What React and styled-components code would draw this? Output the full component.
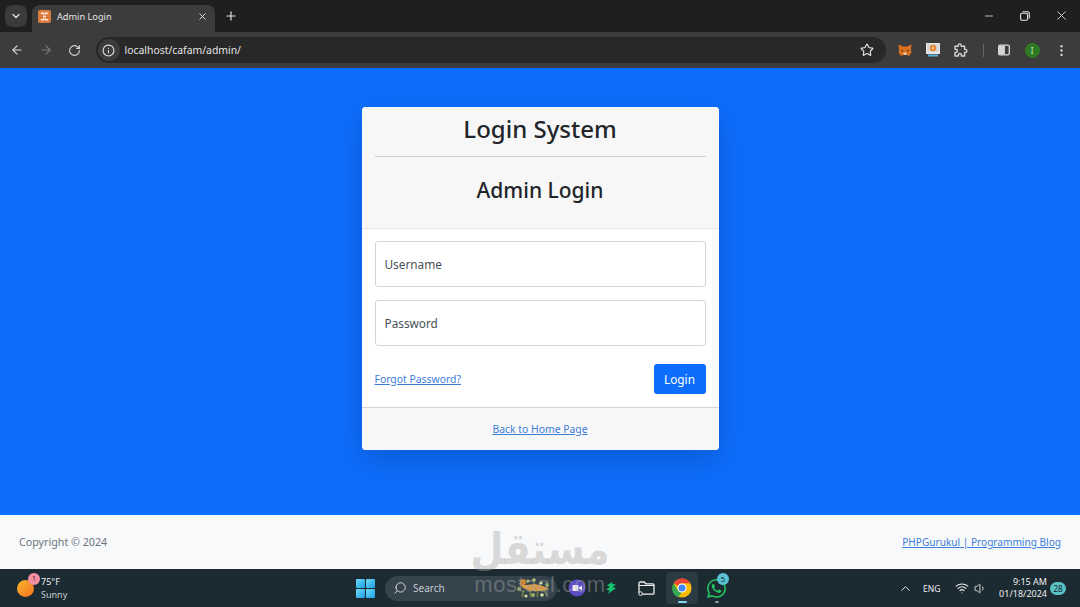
import React from "react";
import styled, { createGlobalStyle } from "styled-components";
import {
  ArrowLeft,
  ArrowRight,
  RotateCw,
  Info,
  Star,
  ChevronDown,
  ChevronUp,
  X,
  Plus,
  Minus,
  EllipsisVertical,
  Search,
  Wifi,
  Volume1,
} from "lucide-react";
import { BsWhatsapp } from "react-icons/bs";

const GlobalStyle = createGlobalStyle`
  html, body {
    margin: 0;
    padding: 0;
    height: 100%;
    overflow: hidden;
  }
  * {
    box-sizing: border-box;
  }
  body {
    font-family: "Noto Sans", "Open Sans", "Liberation Sans", sans-serif;
  }
`;

function XamppIcon() {
  return (
    <svg width="13" height="13" viewBox="0 0 13 13">
      <rect width="13" height="13" rx="2" fill="#d97b3c" />
      <path
        d="M2.8 3.2h2.8v1.6M10.2 3.2H7.4v1.6M2.8 9.8h2.8V8.2M10.2 9.8H7.4V8.2M5 6.5h3"
        stroke="#fbe6d2"
        strokeWidth="1.4"
        fill="none"
      />
    </svg>
  );
}

function FoxIcon() {
  return (
    <svg width="14" height="13" viewBox="0 0 14 13">
      <path d="M0.5 0.5 5 2.5h4L13.5 0.5 13 6l.5 2.5L11 12 8.5 11h-3L3 12 .5 8.5 1 6z" fill="#d9701f" />
      <path d="M5 6.5 3 5.5 4.5 8zM9 6.5l2-1L9.5 8z" fill="#40281a" />
      <path d="M5.5 8.5h3L8.5 11h-3z" fill="#e8c8a8" />
    </svg>
  );
}

function MonitorExtension() {
  return (
    <svg width="14" height="14" viewBox="0 0 14 14">
      <rect width="14" height="11" fill="#e6e6e6" />
      <rect x="1" y="1" width="12" height="8" fill="#d8d8d8" />
      <circle cx="7" cy="5" r="3.2" fill="#e8832f" />
      <circle cx="7" cy="5" r="1.2" fill="#f6d6b0" />
      <rect x="2" y="11.5" width="10" height="2" fill="#5fb0d8" />
    </svg>
  );
}

function PuzzleIcon() {
  return (
    <svg width="14" height="14" viewBox="0 0 14 14">
      <path
        d="M1 3.2h3.2V2.4a1.5 1.5 0 0 1 3 0v.8h3.4v3.2h.8a1.5 1.5 0 0 1 0 3h-.8V13H7.4v-1a1.5 1.5 0 0 0-3 0v1H1V9.4h.8a1.6 1.6 0 0 0 0-3.2H1z"
        fill="none"
        stroke="#d4d4d4"
        strokeWidth="1.4"
        strokeLinejoin="round"
      />
    </svg>
  );
}

function SidePanelIcon() {
  return (
    <svg width="12" height="12" viewBox="0 0 13 12">
      <rect x=".75" y=".75" width="11.5" height="10.5" rx="1.5" fill="#d4d4d4" stroke="#d4d4d4" strokeWidth="1.5" />
      <rect x="7.5" y="1.5" width="4" height="9" fill="#3c3c3c" />
    </svg>
  );
}

function RestoreIcon() {
  return (
    <svg width="10" height="10" viewBox="0 0 10 10">
      <rect x=".6" y="2.2" width="7" height="7" rx="1.4" fill="none" stroke="#e6e6e6" strokeWidth="1.1" />
      <path d="M2.6 .7h5a1.7 1.7 0 0 1 1.7 1.7v5" fill="none" stroke="#e6e6e6" strokeWidth="1.1" />
    </svg>
  );
}

function WindowsLogo() {
  return (
    <svg width="19" height="19" viewBox="0 0 19 19">
      <defs>
        <linearGradient id="winBlue" x1="0" y1="0" x2="1" y2="1">
          <stop offset="0" stopColor="#6fdcf7" />
          <stop offset="1" stopColor="#1a9ee6" />
        </linearGradient>
      </defs>
      <rect x="0" y="0" width="9" height="9" rx="1" fill="url(#winBlue)" />
      <rect x="10" y="0" width="9" height="9" rx="1" fill="url(#winBlue)" />
      <rect x="0" y="10" width="9" height="9" rx="1" fill="url(#winBlue)" />
      <rect x="10" y="10" width="9" height="9" rx="1" fill="url(#winBlue)" />
    </svg>
  );
}

function MeetIcon() {
  return (
    <svg width="18" height="18" viewBox="0 0 18 18">
      <circle cx="9" cy="9" r="8.5" fill="#5b4bc4" />
      <rect x="4.5" y="6" width="6" height="6" rx="1" fill="#f3eefc" />
      <path d="M11 8.5 14 6.5v5L11 9.5z" fill="#f3eefc" />
    </svg>
  );
}

function BoltIcon() {
  return (
    <svg width="11" height="12" viewBox="0 0 11 12">
      <path d="M6 0 1 3.5 4 5 0 7.5l3.5 1L2 12l8-6-3.5-1L10 2.5 6.5 2z" fill="#12c46b" />
    </svg>
  );
}

function FolderCloud() {
  return (
    <svg width="17" height="15" viewBox="0 0 17 15">
      <path
        d="M1 12V2.2C1 1.5 1.5 1 2.2 1h4l1.6 1.8h7c.7 0 1.2.5 1.2 1.2v8c0 .7-.5 1.2-1.2 1.2H4"
        fill="none"
        stroke="#f0f0f0"
        strokeWidth="1.3"
      />
      <path d="M1 4.5h15" stroke="#f0f0f0" strokeWidth="1" />
      <circle cx="2.6" cy="12.6" r="1.8" fill="#1c2a32" stroke="#f0f0f0" strokeWidth="1" />
    </svg>
  );
}

function ChromeLogo() {
  return (
    <svg width="20" height="20" viewBox="0 0 48 48">
      <circle cx="24" cy="24" r="23" fill="#fbbc04" />
      <path d="M24 1a23 23 0 0 1 19.9 11.5H24a11.5 11.5 0 0 0-10 5.8L4.1 12.5A23 23 0 0 1 24 1z" fill="#ea4335" />
      <path d="M4.1 12.5 14 29.8A11.5 11.5 0 0 0 24 35.5L14 46A23 23 0 0 1 4.1 12.5z" fill="#34a853" />
      <circle cx="24" cy="24" r="11" fill="#fff" />
      <circle cx="24" cy="24" r="8.5" fill="#4285f4" />
    </svg>
  );
}

function Doodle() {
  return (
    <svg width="36" height="22" viewBox="0 0 36 22">
      <path d="M3 6 10 8l9-1 8 2 6 3-7 2-12 0-7-3z" fill="#d99a45" />
      <circle cx="7" cy="5" r="3" fill="#c98736" />
      <path d="M8 13l-2 7M14 14l1 6M22 14l-1 6M28 13l3 6" stroke="#6f7f45" strokeWidth="1.6" />
      <circle cx="3" cy="12" r="2" fill="#8fa35a" />
      <circle cx="12" cy="4" r="1.6" fill="#b8c26a" />
      <circle cx="18" cy="3" r="1.8" fill="#b8c26a" />
      <circle cx="25" cy="6" r="1.6" fill="#d8dca0" />
      <circle cx="31" cy="8" r="2" fill="#8fa35a" />
      <circle cx="17" cy="18" r="2" fill="#a0ad6a" />
      <circle cx="26" cy="18" r="1.8" fill="#d8dca0" />
      <circle cx="10" cy="19" r="1.6" fill="#d8dca0" />
    </svg>
  );
}

export default function App() {
  return (
    <>
      <GlobalStyle />
      <Screen>
        <TabStrip>
          <TabMenu>
            <ChevronDown size={12} strokeWidth={2.5} />
          </TabMenu>
          <Tab>
            <XamppIcon />
            <TabTitle>Admin Login</TabTitle>
            <X size={11} strokeWidth={2} color="#e3e3e3" />
          </Tab>
          <NewTab>
            <Plus size={14} strokeWidth={2} />
          </NewTab>
          <WindowControls>
            <WindowButton>
              <Minus size={12} strokeWidth={1.6} />
            </WindowButton>
            <WindowButton>
              <RestoreIcon />
            </WindowButton>
            <WindowButton>
              <X size={15} strokeWidth={1.4} />
            </WindowButton>
          </WindowControls>
        </TabStrip>

        <Toolbar>
          <NavButton>
            <ArrowLeft size={14} strokeWidth={2} />
          </NavButton>
          <NavButton $muted>
            <ArrowRight size={14} strokeWidth={2} />
          </NavButton>
          <NavButton>
            <RotateCw size={13} strokeWidth={2} />
          </NavButton>
          <Omnibox>
            <SiteInfo>
              <Info size={13} strokeWidth={2} />
            </SiteInfo>
            <Url>localhost/cafam/admin/</Url>
            <Star size={14} strokeWidth={2} color="#e3e3e3" />
          </Omnibox>
          <Extensions>
            <FoxIcon />
            <MonitorExtension />
            <PuzzleIcon />
            <ToolbarDivider />
            <SidePanelIcon />
            <Avatar>I</Avatar>
            <EllipsisVertical size={15} strokeWidth={2} color="#d4d4d4" />
          </Extensions>
        </Toolbar>

        <Main>
          <Card>
            <CardHeader>
              <SiteTitle>Login System</SiteTitle>
              <HeaderRule />
              <PageTitle>Admin Login</PageTitle>
            </CardHeader>
            <CardBody>
              <Field>Username</Field>
              <Field>Password</Field>
              <Actions>
                <SmallLink href="#">Forgot Password?</SmallLink>
                <LoginButton>Login</LoginButton>
              </Actions>
            </CardBody>
            <CardFooter>
              <SmallLink href="#">Back to Home Page</SmallLink>
            </CardFooter>
          </Card>
        </Main>

        <PageFooter>
          <Copyright>Copyright © 2024</Copyright>
          <FooterLink href="#">PHPGurukul | Programming Blog</FooterLink>
        </PageFooter>

        <Taskbar>
          <Weather>
            <Sun>
              <SunBadge>1</SunBadge>
            </Sun>
            <WeatherText>
              <span>75°F</span>
              <WeatherNote>Sunny</WeatherNote>
            </WeatherText>
          </Weather>

          <Centre>
            <WindowsLogo />
            <SearchPill>
              <Search size={14} strokeWidth={1.6} style={{ transform: "scaleX(-1)" }} />
              <SearchLabel>Search</SearchLabel>
              <Doodle />
            </SearchPill>
            <TaskIcon>
              <MeetIcon />
            </TaskIcon>
            <TaskIcon>
              <BoltIcon />
            </TaskIcon>
            <TaskIcon>
              <FolderCloud />
            </TaskIcon>
            <ActiveTask>
              <ChromeLogo />
              <ActiveBar />
            </ActiveTask>
            <TaskIcon>
              <BsWhatsapp size={19} color="#22c55e" />
              <CountBadge>5</CountBadge>
              <OpenDot />
            </TaskIcon>
          </Centre>

          <Tray>
            <ChevronUp size={15} strokeWidth={1.5} />
            <TrayLang>ENG</TrayLang>
            <WifiSlot>
              <Wifi size={14} strokeWidth={1.8} />
            </WifiSlot>
            <SpeakerSlot>
              <Volume1 size={13} strokeWidth={1.6} />
            </SpeakerSlot>
            <Clock>
              <span>9:15 AM</span>
              <span>01/18/2024</span>
            </Clock>
            <Notifications>28</Notifications>
          </Tray>
        </Taskbar>

        <Watermark>
          <WatermarkArabic>مستقل</WatermarkArabic>
          <WatermarkLatin>mostaql.com</WatermarkLatin>
        </Watermark>
      </Screen>
    </>
  );
}

const Screen = styled.div`
  position: relative;
  width: 1080px;
  height: 607px;
  display: flex;
  flex-direction: column;
  overflow: hidden;
  background: #0d6efd;
`;

const TabStrip = styled.div`
  height: 32px;
  flex: none;
  display: flex;
  align-items: flex-end;
  padding-left: 5px;
  background: #1f1f1f;
  color: #e3e3e3;
`;

const TabMenu = styled.div`
  width: 22px;
  height: 22px;
  margin-bottom: 5px;
  display: flex;
  align-items: center;
  justify-content: center;
  border-radius: 7px;
  background: #3a3a3a;
`;

const Tab = styled.div`
  width: 183px;
  height: 27px;
  margin-left: 5px;
  padding: 0 7px 4px 6px;
  display: flex;
  align-items: center;
  border-radius: 8px 8px 0 0;
  background: #3c3c3c;
`;

const TabTitle = styled.span`
  flex: 1;
  margin-left: 6px;
  font-size: 9.2px;
  color: #e6e6e6;
`;

const NewTab = styled.div`
  width: 14px;
  height: 14px;
  margin: 0 0 9px 9px;
  display: flex;
`;

const WindowControls = styled.div`
  margin-left: auto;
  align-self: stretch;
  display: flex;
`;

const WindowButton = styled.div`
  width: 36.5px;
  display: flex;
  align-items: center;
  justify-content: center;
  padding-bottom: 1px;
`;

const Toolbar = styled.div`
  height: 36px;
  flex: none;
  display: flex;
  align-items: center;
  padding: 0 11px 0 3px;
  background: #3c3c3c;
  color: #d4d4d4;
`;

const NavButton = styled.div`
  width: 28.5px;
  display: flex;
  justify-content: center;
  color: ${(props) => (props.$muted ? "#7b7b7b" : "#d8d8d8")};
`;

const Omnibox = styled.div`
  width: 790px;
  height: 26px;
  margin-left: 7px;
  padding: 0 12px 0 1px;
  display: flex;
  align-items: center;
  border-radius: 13px;
  background: #282828;
`;

const SiteInfo = styled.div`
  width: 22px;
  height: 22px;
  margin-left: 1px;
  display: flex;
  align-items: center;
  justify-content: center;
  border-radius: 50%;
  background: #3c3c3c;
  color: #e3e3e3;
`;

const Url = styled.span`
  flex: 1;
  margin-left: 5px;
  font-size: 10.4px;
  color: #e3e3e3;
`;

const Extensions = styled.div`
  flex: 1;
  display: flex;
  align-items: center;
  justify-content: space-between;
  padding-left: 12px;
`;

const ToolbarDivider = styled.div`
  width: 1px;
  height: 13px;
  background: #666;
`;

const Avatar = styled.div`
  width: 15px;
  height: 15px;
  display: flex;
  align-items: center;
  justify-content: center;
  border-radius: 50%;
  background: #2e7a22;
  color: #cfe9c6;
  font-size: 8px;
`;

const Main = styled.main`
  flex: 1;
  display: flex;
  justify-content: center;
  padding-top: 39px;
  background: #0d6efd;
`;

const Card = styled.section`
  width: 357px;
  height: 343px;
  display: flex;
  flex-direction: column;
  border-radius: 4px;
  overflow: hidden;
  background: #fff;
  box-shadow: 0 10px 34px rgba(0, 0, 0, 0.18);
`;

const CardHeader = styled.header`
  height: 122px;
  flex: none;
  padding: 3px 13px 0;
  text-align: center;
  color: #212529;
  background: #f7f7f7;
  border-bottom: 1px solid #e6e6e6;
`;

const SiteTitle = styled.h1`
  margin: 0;
  font-size: 24px;
  line-height: 38px;
  font-weight: 500;
`;

const HeaderRule = styled.hr`
  margin: 8px 0 0;
  border: 0;
  border-top: 1px solid #cfcfcf;
`;

const PageTitle = styled.h2`
  margin: 14px 0 0;
  font-size: 21px;
  line-height: 38px;
  font-weight: 500;
`;

const CardBody = styled.div`
  height: 178px;
  flex: none;
  padding: 12px 13px 0;
`;

const Field = styled.div`
  height: 46px;
  margin-bottom: 13px;
  padding-left: 9px;
  display: flex;
  align-items: center;
  border: 1px solid #ced4da;
  border-radius: 3px;
  font-size: 11.8px;
  color: #495057;
  background: #fff;
`;

const Actions = styled.div`
  display: flex;
  align-items: center;
  justify-content: space-between;
  margin-top: 18px;
`;

const SmallLink = styled.a`
  font-size: 10.4px;
  color: #3b7dd8;
  text-decoration: underline;
`;

const LoginButton = styled.button`
  width: 52px;
  height: 30px;
  padding: 0;
  border: 0;
  border-radius: 3px;
  font-family: inherit;
  font-size: 11.8px;
  color: #fff;
  background: #0d6efd;
`;

const CardFooter = styled.footer`
  flex: 1;
  display: flex;
  align-items: center;
  justify-content: center;
  background: #f7f7f7;
  border-top: 1px solid #d4d4d4;
`;

const PageFooter = styled.footer`
  height: 54px;
  flex: none;
  padding: 0 19px;
  display: flex;
  align-items: center;
  justify-content: space-between;
  background: #f8f9fa;
`;

const Copyright = styled.span`
  font-size: 10.7px;
  color: #6c757d;
`;

const FooterLink = styled.a`
  font-size: 10.1px;
  color: #3b7dd8;
  text-decoration: underline;
`;

const Taskbar = styled.div`
  height: 38px;
  flex: none;
  position: relative;
  display: flex;
  align-items: center;
  padding-left: 17px;
  background: #1c2a32;
  color: #e8e8e8;
`;

const Weather = styled.div`
  width: 339px;
  display: flex;
  align-items: center;
`;

const Sun = styled.div`
  position: relative;
  width: 17px;
  height: 17px;
  border-radius: 50%;
  background: linear-gradient(135deg, #f6b52c, #f5731f);
`;

const SunBadge = styled.span`
  position: absolute;
  top: -7px;
  right: -6px;
  width: 12px;
  height: 12px;
  display: flex;
  align-items: center;
  justify-content: center;
  border-radius: 50%;
  font-size: 7px;
  color: #4a1c24;
  background: #f58ea0;
`;

const WeatherText = styled.div`
  margin-left: 7px;
  display: flex;
  flex-direction: column;
  font-size: 9px;
  line-height: 13px;
  color: #f0f0f0;
`;

const WeatherNote = styled.span`
  color: #c9ced1;
`;

const Centre = styled.div`
  display: flex;
  align-items: center;
`;

const SearchPill = styled.div`
  width: 172px;
  height: 25px;
  margin: 0 2px 0 10px;
  padding: 0 5px 0 8px;
  display: flex;
  align-items: center;
  border-radius: 13px;
  background: #35444c;
  color: #d8dcde;
`;

const SearchLabel = styled.span`
  flex: 1;
  margin-left: 6px;
  font-size: 10px;
  color: #c4cacd;
`;

const TaskIcon = styled.div`
  position: relative;
  width: 35px;
  height: 32px;
  display: flex;
  align-items: center;
  justify-content: center;
`;

const ActiveTask = styled(TaskIcon)`
  width: 32px;
  margin: 0 1px 0 2px;
  border-radius: 4px;
  background: #2c3a42;
`;

const ActiveBar = styled.span`
  position: absolute;
  left: 12px;
  bottom: 1px;
  width: 9px;
  height: 2px;
  border-radius: 1px;
  background: #7fd4ee;
`;

const CountBadge = styled.span`
  position: absolute;
  top: 1px;
  right: 5px;
  width: 12px;
  height: 12px;
  display: flex;
  align-items: center;
  justify-content: center;
  border-radius: 50%;
  font-size: 7.5px;
  color: #12242c;
  background: #5bc2d6;
`;

const OpenDot = styled.span`
  position: absolute;
  left: 16px;
  bottom: 1px;
  width: 4px;
  height: 2px;
  border-radius: 1px;
  background: #8d979c;
`;

const Tray = styled.div`
  position: absolute;
  right: 14px;
  top: 0;
  bottom: 0;
  display: flex;
  align-items: center;
  color: #eceff0;
`;

const TrayLang = styled.span`
  width: 20px;
  margin-left: 10px;
  font-size: 8.5px;
`;

const WifiSlot = styled.span`
  display: flex;
  margin-left: 12px;
`;

const SpeakerSlot = styled.span`
  display: flex;
  margin-left: 5px;
`;

const Clock = styled.div`
  display: flex;
  flex-direction: column;
  align-items: flex-end;
  margin-left: 12px;
  font-size: 9px;
  line-height: 12.5px;
`;

const Notifications = styled.span`
  width: 16px;
  height: 13px;
  margin-left: 3px;
  display: flex;
  align-items: center;
  justify-content: center;
  border-radius: 7px;
  font-size: 8px;
  color: #12242c;
  background: #5bc2c4;
`;

const Watermark = styled.div`
  position: absolute;
  left: 475px;
  top: 524px;
  width: 130px;
  display: flex;
  flex-direction: column;
  align-items: center;
  color: rgba(170, 170, 170, 0.42);
  pointer-events: none;
`;

const WatermarkArabic = styled.span`
  font-family: "DejaVu Sans", sans-serif;
  font-size: 38px;
  font-weight: 700;
  line-height: 50px;
  transform: scaleY(1.15);
`;

const WatermarkLatin = styled.span`
  font-family: "Liberation Sans", sans-serif;
  font-size: 22px;
  line-height: 22px;
  letter-spacing: 0.6px;
`;
